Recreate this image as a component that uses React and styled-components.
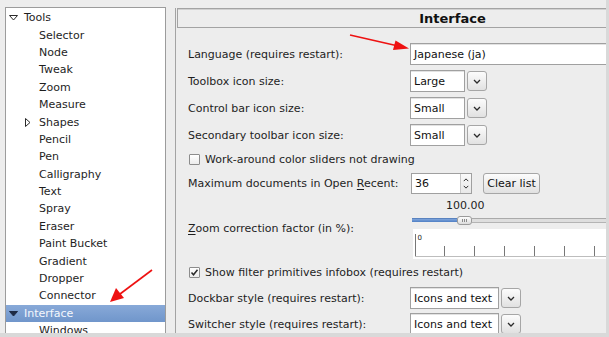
import React from 'react';
import styled, { createGlobalStyle } from 'styled-components';

const Global = createGlobalStyle`
  html, body { margin: 0; padding: 0; background: #d9d9d9; }
  body { font-family: "DejaVu Sans", "Liberation Sans", sans-serif; }
  * { box-sizing: border-box; }
`;

const Page = styled.div`
  position: relative;
  width: 609px;
  height: 337px;
  overflow: hidden;
  background: #d9d9d9;
`;

const Window = styled.div`
  width: 606px;
  height: 333px;
  overflow: hidden;
  background: #ededed;
  display: flex;
  align-items: flex-start;
  gap: 9px;
  padding: 7px 0 0 5px;
`;

/* ---------- Tree ---------- */
const Tree = styled.div`
  flex: 0 0 161px;
  height: 340px;
  background: #fff;
  border: 1px solid #9c9c9c;
  padding-top: 1px;
`;

const TreeRow = styled.div`
  height: 17.4px;
  display: flex;
  align-items: center;
  padding-left: ${p => 3 + p.$level * 15}px;
  font-size: 11px;
  color: ${p => (p.$selected ? '#f4f7fc' : '#1e1e1e')};
  background: ${p => (p.$selected ? 'linear-gradient(#88a9d8, #7096cb)' : 'transparent')};
  white-space: nowrap;
`;

const ExpSlot = styled.span`
  flex: 0 0 15px;
  height: 17px;
  display: flex;
  align-items: center;
`;

const Expander = ({ dir, dark }) => (
  <ExpSlot>
    {dir === 'down' && (
      <svg width="15" height="17" viewBox="0 0 15 17">
        <polygon
          points="0.5,6.5 8.5,6.5 4.5,11"
          fill={dark ? '#1d2a45' : '#fff'}
          stroke={dark ? '#1d2a45' : '#2a2a2a'}
          strokeWidth="1"
        />
      </svg>
    )}
    {dir === 'right' && (
      <svg width="15" height="17" viewBox="0 0 15 17">
        <polygon points="1.5,4.5 1.5,12.5 6,8.5" fill="#fff" stroke="#2a2a2a" strokeWidth="1" />
      </svg>
    )}
  </ExpSlot>
);

/* ---------- Right panel ---------- */
const RightPanel = styled.div`
  flex: 0 0 560px;
  margin-top: 1px;
  height: 340px;
  border-left: 1px solid #a3a3a3;
  padding-left: 1px;
`;

const Header = styled.div`
  width: 551px;
  height: 20px;
  border: 1px solid #a3a3a3;
  box-shadow: inset 0 1px 0 #d0d0d0;
  display: flex;
  align-items: center;
  justify-content: center;
  font-weight: bold;
  font-size: 13px;
  color: #111;
`;

const Form = styled.div`
  padding: 15px 0 0 11px;
  display: flex;
  flex-direction: column;
`;

const Row = styled.div`
  display: grid;
  grid-template-columns: 222px 1fr;
  align-items: center;
  height: ${p => p.$h}px;
  margin-top: ${p => p.$mt}px;
  font-size: 11px;
  color: #1e1e1e;
`;

const Label = styled.span`
  white-space: nowrap;
  padding-top: 1px;
`;

const U = styled.span`
  text-decoration: underline;
  text-underline-offset: 2px;
`;

const Controls = styled.div`
  display: flex;
  align-items: center;
`;

const Entry = styled.div`
  width: ${p => p.$w}px;
  height: ${p => p.$h || 22}px;
  background: #fff;
  border: 1px solid #a0a0a0;
  box-shadow: inset 0 1px 0 #e2e2e2;
  display: flex;
  align-items: center;
  padding-left: 3px;
  font-size: 11px;
  color: #111;
  white-space: nowrap;
`;

const Button = styled.div`
  width: ${p => p.$w}px;
  height: ${p => p.$h}px;
  margin-left: ${p => p.$ml}px;
  border: 1px solid #a6a6a6;
  border-radius: 3px;
  background: linear-gradient(#fcfcfc, #e1e1e1);
  display: flex;
  align-items: center;
  justify-content: center;
  font-size: 11px;
  color: #111;
  white-space: nowrap;
`;

const Chevron = ({ up }) => (
  <svg width="8" height="5" viewBox="0 0 8 5">
    <path
      d={up ? 'M1 4 L4 1 L7 4' : 'M1 1 L4 4 L7 1'}
      fill="none"
      stroke="#2b2b2b"
      strokeWidth="1.3"
    />
  </svg>
);

const Combo = ({ value, w }) => (
  <Controls>
    <Entry $w={w}>{value}</Entry>
    <Button $w={20} $h={20} $ml={2}>
      <Chevron />
    </Button>
  </Controls>
);

const Spin = styled.div`
  margin-left: 1px;
  width: 61px;
  height: 21px;
  background: #fff;
  border: 1px solid #a0a0a0;
  display: flex;
  align-items: stretch;
  font-size: 11px;
  color: #111;
`;

const SpinText = styled.span`
  flex: 1;
  display: flex;
  align-items: center;
  padding-left: 3px;
`;

const SpinArrows = styled.span`
  flex: 0 0 11px;
  display: flex;
  flex-direction: column;
  align-items: center;
  justify-content: center;
  gap: 3px;
  border-left: 1px solid #c8c8c8;
  background: linear-gradient(#fafafa, #e8e8e8);
  svg { width: 6px; height: 4px; }
`;

const CheckRow = styled.div`
  display: flex;
  align-items: center;
  gap: 5px;
  padding-left: 1px;
  height: ${p => p.$h}px;
  margin-top: ${p => p.$mt}px;
  font-size: 11px;
  color: #1e1e1e;
  white-space: nowrap;
`;

const Box = styled.span`
  width: 11px;
  height: 11px;
  border: 1px solid #8c8c8c;
  border-radius: 1px;
  background: linear-gradient(#fff, #ececec);
  display: flex;
  align-items: center;
  justify-content: center;
`;

const ZoomBlock = styled.div`
  display: flex;
  flex-direction: column;
`;

const Value = styled.div`
  height: 16px;
  line-height: 16px;
  padding-left: 36px;
  font-size: 11px;
  color: #1e1e1e;
`;

const Slider = styled.div`
  height: 13px;
  margin-left: 2px;
  display: flex;
  align-items: center;
`;

const Fill = styled.span`
  flex: 0 0 45px;
  height: 4px;
  background: linear-gradient(#7fa5dc, #4f7fc4);
  border-top: 1px solid #5a83bf;
`;

const Thumb = styled.span`
  flex: 0 0 15px;
  height: 9px;
  border: 1px solid #9b9b9b;
  border-radius: 3px;
  background: linear-gradient(#fdfdfd, #dcdcdc);
  display: flex;
  align-items: center;
  justify-content: center;
  gap: 1px;
  margin-top: 1px;
`;

const Grip = styled.span`
  width: 1px;
  height: 3px;
  background: #8a8a8a;
`;

const Rest = styled.span`
  flex: 1;
  height: 5px;
  border-top: 1px solid #aaa;
  border-bottom: 1px solid #b4b4b4;
  background: #dedede;
`;

const RulerBox = styled.div`
  margin: 2px 0 0 3px;
  height: 30px;
  background: #fff;
`;

const Ruler = () => {
  const ticks = [31, 61, 91, 121, 151, 181];
  return (
    <RulerBox>
      <svg width="200" height="30" viewBox="0 0 200 30">
        <line x1="2.5" y1="5" x2="2.5" y2="28" stroke="#777" strokeWidth="1" />
        <text x="4.5" y="11" fontSize="7" fontFamily="DejaVu Sans, sans-serif" fill="#222">0</text>
        {ticks.map(x => (
          <line key={x} x1={x + 0.5} y1="17" x2={x + 0.5} y2="28" stroke="#777" strokeWidth="1" />
        ))}
        <line x1="2" y1="27.5" x2="200" y2="27.5" stroke="#bdbdbd" strokeWidth="1" />
      </svg>
    </RulerBox>
  );
};

const Overlay = styled.svg`
  position: absolute;
  left: 0;
  top: 0;
  pointer-events: none;
`;

const tree = [
  { t: 'Tools', l: 0, e: 'down' },
  { t: 'Selector', l: 1 },
  { t: 'Node', l: 1 },
  { t: 'Tweak', l: 1 },
  { t: 'Zoom', l: 1 },
  { t: 'Measure', l: 1 },
  { t: 'Shapes', l: 1, e: 'right' },
  { t: 'Pencil', l: 1 },
  { t: 'Pen', l: 1 },
  { t: 'Calligraphy', l: 1 },
  { t: 'Text', l: 1 },
  { t: 'Spray', l: 1 },
  { t: 'Eraser', l: 1 },
  { t: 'Paint Bucket', l: 1 },
  { t: 'Gradient', l: 1 },
  { t: 'Dropper', l: 1 },
  { t: 'Connector', l: 1 },
  { t: 'Interface', l: 0, e: 'down', s: true },
  { t: 'Windows', l: 1 },
];

export default function App() {
  return (
    <Page>
      <Global />
      <Window>
        <Tree>
          {tree.map(r => (
            <TreeRow key={r.t} $level={r.l} $selected={r.s}>
              <Expander dir={r.e} dark={r.s} />
              {r.t}
            </TreeRow>
          ))}
        </Tree>
        <RightPanel>
          <Header>Interface</Header>
          <Form>
            <Row $h={22} $mt={0}>
              <Label>Language (requires restart):</Label>
              <Controls>
                <Entry $w={260}>Japanese (ja)</Entry>
              </Controls>
            </Row>
            <Row $h={22} $mt={5}>
              <Label>Toolbox icon size:</Label>
              <Combo value="Large" w={55} />
            </Row>
            <Row $h={22} $mt={5}>
              <Label>Control bar icon size:</Label>
              <Combo value="Small" w={55} />
            </Row>
            <Row $h={22} $mt={5}>
              <Label>Secondary toolbar icon size:</Label>
              <Combo value="Small" w={55} />
            </Row>
            <CheckRow $h={20} $mt={3}>
              <Box />
              Work-around color sliders not drawing
            </CheckRow>
            <Row $h={22} $mt={3}>
              <Label>
                Maximum documents in Open <U>R</U>ecent:
              </Label>
              <Controls>
                <Spin>
                  <SpinText>36</SpinText>
                  <SpinArrows>
                    <Chevron up />
                    <Chevron />
                  </SpinArrows>
                </Spin>
                <Button $w={57} $h={21} $ml={11}>Clear list</Button>
              </Controls>
            </Row>
            <Row $h={62} $mt={3}>
              <Label>
                <U>Z</U>oom correction factor (in %):
              </Label>
              <ZoomBlock>
                <Value>100.00</Value>
                <Slider>
                  <Fill />
                  <Thumb>
                    <Grip />
                    <Grip />
                    <Grip />
                  </Thumb>
                  <Rest />
                </Slider>
                <Ruler />
              </ZoomBlock>
            </Row>
            <CheckRow $h={20} $mt={3}>
              <Box>
                <svg width="9" height="9" viewBox="0 0 9 9">
                  <path d="M1.5 4.5 L3.5 6.8 L7.5 1.8" fill="none" stroke="#2a2a2a" strokeWidth="1.5" />
                </svg>
              </Box>
              Show filter primitives infobox (requires restart)
            </CheckRow>
            <Row $h={22} $mt={5}>
              <Label>Dockbar style (requires restart):</Label>
              <Combo value="Icons and text" w={89} />
            </Row>
            <Row $h={22} $mt={4}>
              <Label>Switcher style (requires restart):</Label>
              <Combo value="Icons and text" w={89} />
            </Row>
          </Form>
        </RightPanel>
      </Window>
      <Overlay width="609" height="337" viewBox="0 0 609 337">
        <line x1="350" y1="35" x2="396" y2="45.5" stroke="#ee1111" strokeWidth="1.6" />
        <polygon points="409,48.5 393,50 395.5,40.5" fill="#ee1111" />
        <line x1="152" y1="270" x2="120" y2="294" stroke="#ee1111" strokeWidth="1.6" />
        <polygon points="110,302 116,288 124,298" fill="#ee1111" />
      </Overlay>
    </Page>
  );
}
